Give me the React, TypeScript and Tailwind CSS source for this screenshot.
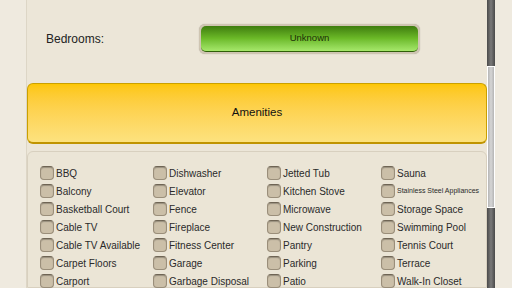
import React from 'react';

const amenities: string[][] = [
  ['BBQ', 'Balcony', 'Basketball Court', 'Cable TV', 'Cable TV Available', 'Carpet Floors', 'Carport'],
  ['Dishwasher', 'Elevator', 'Fence', 'Fireplace', 'Fitness Center', 'Garage', 'Garbage Disposal'],
  ['Jetted Tub', 'Kitchen Stove', 'Microwave', 'New Construction', 'Pantry', 'Parking', 'Patio'],
  ['Sauna', 'Stainless Steel Appliances', 'Storage Space', 'Swimming Pool', 'Tennis Court', 'Terrace', 'Walk-In Closet'],
];

const Check: React.FC<{ label: string }> = ({ label }) => (
  <div className="flex items-center h-[18px] gap-[2px]">
    <div className="w-[14px] h-[14px] shrink-0 rounded-[4px] bg-[#cbbfa8] border border-[#9a8e7a] border-t-[#6e6454] shadow-[inset_0_1px_1px_rgba(0,0,0,0.25)]" />
    <span
      className={
        label === 'Stainless Steel Appliances'
          ? 'text-[7px] text-[#2a2a2a] whitespace-nowrap'
          : 'text-[10px] text-[#2a2a2a] whitespace-nowrap'
      }
    >
      {label}
    </span>
  </div>
);

const App: React.FC = () => {
  return (
    <div
      className="w-[512px] h-[288px] overflow-hidden flex bg-[#efeadf]"
      style={{ fontFamily: '"Liberation Sans", Arial, sans-serif' }}
    >
      <div className="w-[26px] shrink-0" />
      <div className="w-[461px] shrink-0 flex flex-col bg-[#ece6d8] border-l border-[#ddd6c6]">
        <div className="h-[83px] shrink-0 flex items-center pl-[19px] pt-[1px] pb-[7px]">
          <span className="text-[12px] text-[#222] w-[153px]">Bedrooms:</span>
          <div className="w-[221px] h-[30px] rounded-[6px] bg-[#cfc5b2] p-[2px] shadow-[0_0_1px_rgba(0,0,0,0.3)]">
            <div className="h-full rounded-[5px] bg-gradient-to-b from-[#3f7d0e] via-[#6cba28] to-[#a6e86a] flex items-center justify-center border-b border-[#2e5e08]">
              <span className="text-[9.5px] text-[#1c2e08]">Unknown</span>
            </div>
          </div>
        </div>
        <div className="h-[61px] shrink-0 rounded-[6px] border border-[#caa000] border-b-2 border-b-[#c09400] bg-gradient-to-b from-[#fdc600] to-[#fde27e] flex items-center justify-center">
          <span className="text-[11.5px] text-[#111]">Amenities</span>
        </div>
        <div className="mt-[7px] flex-1 min-h-0 rounded-t-[6px] border border-[#d8d0bf] bg-[#ebe5d6] pt-[12px] pl-[12px] grid grid-cols-[113px_114px_114px_auto] content-start">
          {amenities.map((col, i) => (
            <div key={i} className="flex flex-col">
              {col.map((a) => (
                <Check key={a} label={a} />
              ))}
            </div>
          ))}
        </div>
      </div>
      <div className="w-[8px] shrink-0 flex flex-col bg-gradient-to-r from-[#4a4a4a] via-[#7a7a7a] to-[#4a4a4a]">
        <div className="h-[66px] shrink-0" />
        <div className="h-[142px] shrink-0 bg-gradient-to-r from-[#b5b5b5] via-[#d6d6d6] to-[#b5b5b5] border border-white" />
      </div>
      <div className="flex-1" />
    </div>
  );
};

export default App;
